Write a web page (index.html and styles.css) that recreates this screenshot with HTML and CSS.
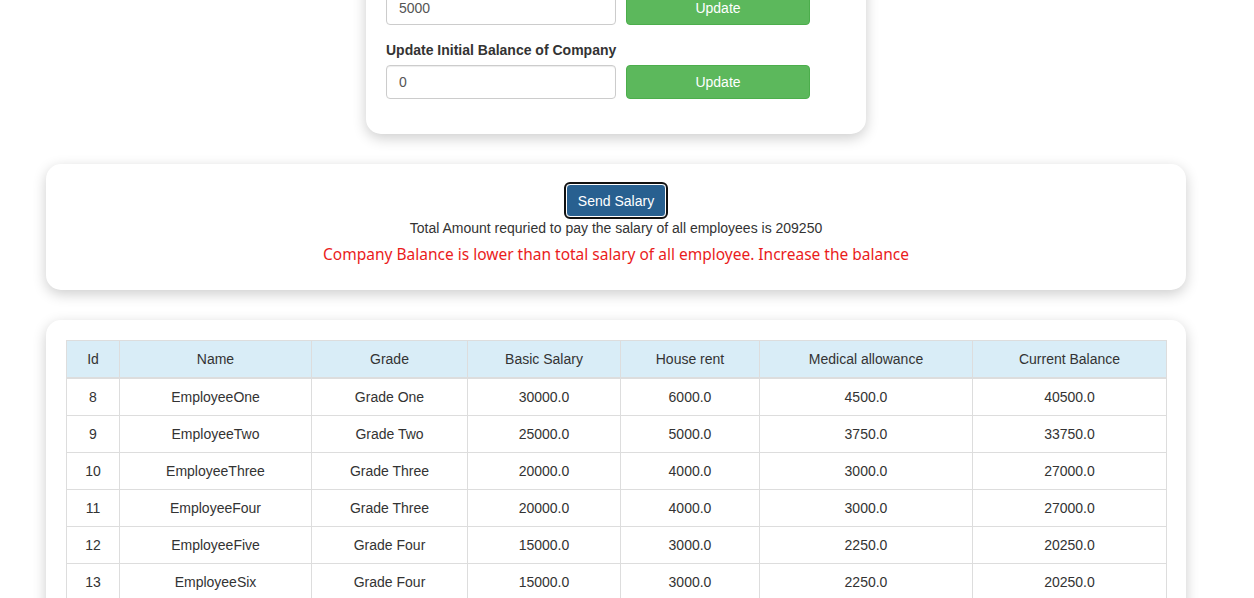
FILE: index.html
```html
<!DOCTYPE html>
<html>
<head>
<meta charset="utf-8">
<link rel="stylesheet" href="styles.css">
</head>
<body>
<div class="page">
  <div class="card settings">
    <div class="form-group">
      <label class="label">Update Basic Salary of Lowest Grade</label>
      <div class="field-row">
        <input class="input" type="text" value="5000">
        <button class="btn-green">Update</button>
      </div>
    </div>
    <div class="form-group">
      <label class="label">Update Initial Balance of Company</label>
      <div class="field-row">
        <input class="input" type="text" value="0">
        <button class="btn-green">Update</button>
      </div>
    </div>
  </div>

  <div class="card salary">
    <button class="btn-primary">Send Salary</button>
    <div class="total">Total Amount requried to pay the salary of all employees is 209250</div>
    <div class="warning">Company Balance is lower than total salary of all employee. Increase the balance</div>
  </div>

  <div class="card table-card">
    <table class="emp-table">
      <colgroup>
        <col style="width:53px"><col style="width:192px"><col style="width:156px"><col style="width:153px"><col style="width:139px"><col style="width:213px"><col style="width:194px">
      </colgroup>
      <thead>
        <tr><th>Id</th><th>Name</th><th>Grade</th><th>Basic Salary</th><th>House rent</th><th>Medical allowance</th><th>Current Balance</th></tr>
      </thead>
      <tbody>
        <tr><td>8</td><td>EmployeeOne</td><td>Grade One</td><td>30000.0</td><td>6000.0</td><td>4500.0</td><td>40500.0</td></tr>
        <tr><td>9</td><td>EmployeeTwo</td><td>Grade Two</td><td>25000.0</td><td>5000.0</td><td>3750.0</td><td>33750.0</td></tr>
        <tr><td>10</td><td>EmployeeThree</td><td>Grade Three</td><td>20000.0</td><td>4000.0</td><td>3000.0</td><td>27000.0</td></tr>
        <tr><td>11</td><td>EmployeeFour</td><td>Grade Three</td><td>20000.0</td><td>4000.0</td><td>3000.0</td><td>27000.0</td></tr>
        <tr><td>12</td><td>EmployeeFive</td><td>Grade Four</td><td>15000.0</td><td>3000.0</td><td>2250.0</td><td>20250.0</td></tr>
        <tr><td>13</td><td>EmployeeSix</td><td>Grade Four</td><td>15000.0</td><td>3000.0</td><td>2250.0</td><td>20250.0</td></tr>
      </tbody>
    </table>
  </div>
</div>
</body>
</html>
```

FILE: styles.css
```css
html, body {
  margin: 0;
  padding: 0;
  background: #fff;
  overflow: hidden;
}
body {
  font-family: "Liberation Sans", Arial, sans-serif;
  font-size: 14px;
  line-height: 20px;
  color: #333;
}
.page {
  width: 1140px;
  margin-left: 46px;
  margin-top: -54px;
}
.card {
  background: #fff;
  border-radius: 15px;
  box-shadow: 0 4px 14px rgba(0, 0, 0, 0.2);
  padding: 20px;
  box-sizing: border-box;
}
.settings {
  width: 500px;
  margin: 0 auto;
}
.form-group {
  margin-bottom: 15px;
}
.label {
  display: block;
  font-weight: bold;
  margin-bottom: 5px;
}
.field-row {
  display: flex;
  gap: 10px;
}
.input {
  width: 230px;
  height: 34px;
  box-sizing: border-box;
  border: 1px solid #ccc;
  border-radius: 4px;
  padding: 6px 12px;
  font-family: "Liberation Sans", Arial, sans-serif;
  font-size: 14px;
  color: #555;
  box-shadow: inset 0 1px 1px rgba(0, 0, 0, 0.075);
}
.btn-green {
  width: 184px;
  height: 34px;
  box-sizing: border-box;
  background: #5cb85c;
  border: 1px solid #4cae4c;
  border-radius: 4px;
  color: #fff;
  font-family: "Liberation Sans", Arial, sans-serif;
  font-size: 14px;
  padding: 6px 12px;
}
.salary {
  margin-top: 30px;
  display: flex;
  flex-direction: column;
  align-items: center;
}
.btn-primary {
  height: 33px;
  box-sizing: border-box;
  background: #286090;
  border: 1px solid #fff;
  border-radius: 4px;
  outline: 2px solid #111;
  outline-offset: 0;
  color: #fff;
  font-family: "Liberation Sans", Arial, sans-serif;
  font-size: 14px;
  padding: 5px 11px;
}
.total {
  margin-top: 1px;
}
.warning {
  margin-top: 5px;
  margin-bottom: 5px;
  font-family: "Noto Sans", "Open Sans", sans-serif;
  font-size: 15.5px;
  line-height: 22px;
  color: #ea1c1c;
}
.table-card {
  margin-top: 30px;
}
.emp-table {
  width: 1100px;
  border-collapse: collapse;
  table-layout: fixed;
}
.emp-table th,
.emp-table td {
  border: 1px solid #ddd;
  padding: 8px;
  text-align: center;
  font-weight: normal;
  height: 20px;
}
.emp-table th {
  background: #d9edf7;
  border-bottom: 2px solid #ddd;
}
```
